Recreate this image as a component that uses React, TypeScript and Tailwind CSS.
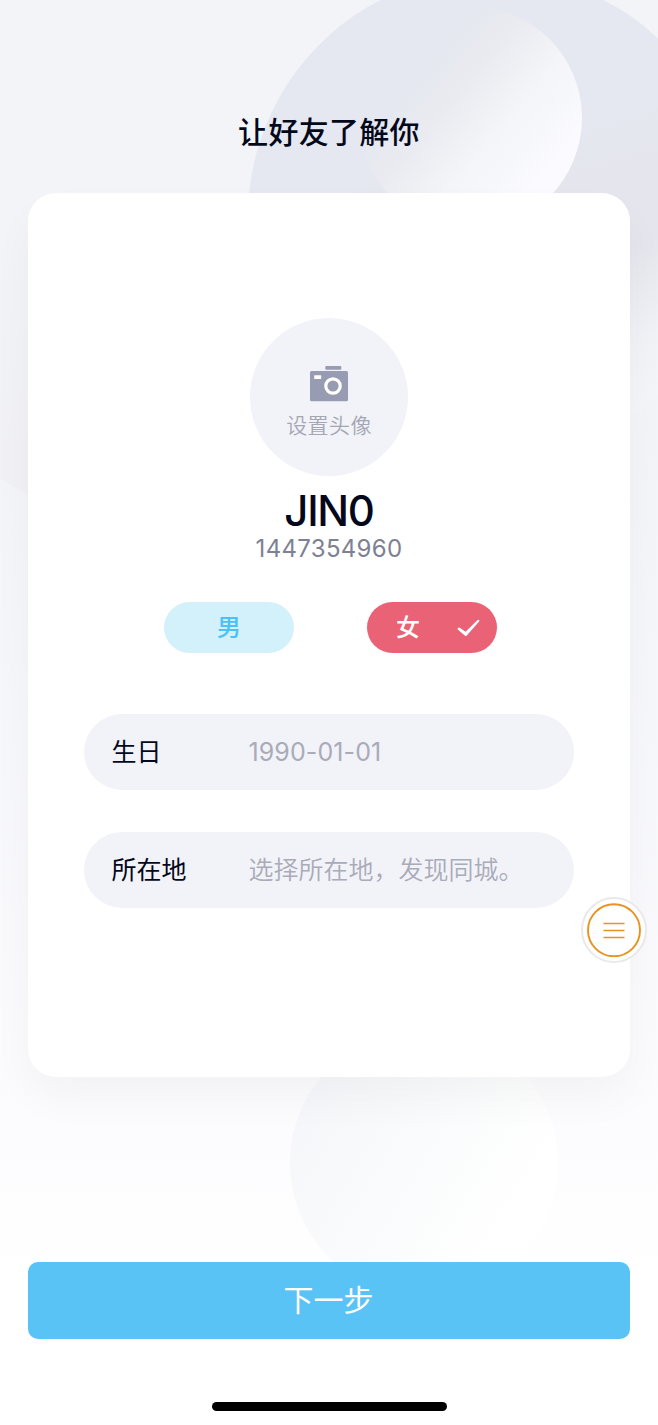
import { useState } from "react";

const fields = [
  { label: "生日", value: "1990-01-01", className: "tracking-[0.1px]" },
  { label: "所在地", value: "选择所在地，发现同城。", className: "font-[350]" },
];

function Backdrop() {
  return (
    <svg
      className="absolute inset-0 h-full w-full"
      viewBox="0 0 658 1425"
      fill="none"
      aria-hidden="true"
    >
      <defs>
        <linearGradient id="big" x1="500" y1="50" x2="600" y2="410" gradientUnits="userSpaceOnUse">
          <stop offset="0" stopColor="#e5e8f0" />
          <stop offset="0.25" stopColor="#e5e8f0" />
          <stop offset="0.4" stopColor="#e4e5ed" />
          <stop offset="0.6" stopColor="#e5e6ed" />
          <stop offset="0.85" stopColor="#f1f2f6" />
          <stop offset="1" stopColor="#f4f5f9" />
        </linearGradient>
        <linearGradient id="small" x1="418" y1="78" x2="540" y2="180" gradientUnits="userSpaceOnUse">
          <stop offset="0" stopColor="#e5e8f0" />
          <stop offset="0.25" stopColor="#eaebf0" />
          <stop offset="0.6" stopColor="#f4f5f8" />
          <stop offset="1" stopColor="#fafaff" />
        </linearGradient>
        <linearGradient id="side" x1="0" y1="230" x2="0" y2="495" gradientUnits="userSpaceOnUse">
          <stop offset="0" stopColor="#f0f0f5" stopOpacity="0" />
          <stop offset="1" stopColor="#f0f0f5" />
        </linearGradient>
        <linearGradient id="low" x1="310" y1="1100" x2="510" y2="1220" gradientUnits="userSpaceOnUse">
          <stop offset="0" stopColor="#f6f7fa" />
          <stop offset="0.5" stopColor="#fafbfc" />
          <stop offset="1" stopColor="#ffffff" />
        </linearGradient>
      </defs>
      <circle cx="135" cy="275" r="244" fill="url(#side)" />
      <circle cx="492" cy="217" r="244" fill="url(#big)" />
      <circle cx="470" cy="118" r="112" fill="url(#small)" />
      <circle cx="424" cy="1163" r="134" fill="url(#low)" />
    </svg>
  );
}

function CameraIcon() {
  return (
    <svg width="38" height="36" viewBox="0 0 38 36" fill="none" aria-hidden="true">
      <rect x="15.3" y="0" width="16" height="3.7" rx="1" fill="#989cb2" />
      <rect x="0" y="5" width="38" height="30.3" rx="1.5" fill="#989cb2" />
      <rect x="4.2" y="9.2" width="7" height="3.8" rx="0.5" fill="#fff" />
      <circle cx="23" cy="20" r="7.2" stroke="#fff" strokeWidth="3.2" />
    </svg>
  );
}

export default function App() {
  const [gender, setGender] = useState("female");

  return (
    <div className="relative flex h-[1425px] w-[658px] flex-col items-center overflow-hidden bg-linear-to-b from-[#f3f4f8] from-30% via-[#fbfbfe] via-75% to-white to-90% font-['Inter','Noto_Sans_CJK_SC',sans-serif] text-[#03081a]">
      <Backdrop />

      {/* Title */}
      <h1 className="relative mt-[110px] h-[83px] text-[30px] leading-[44px] font-medium tracking-[0.3px]">
        让好友了解你
      </h1>

      {/* Profile Card Start */}
      <main className="relative flex h-[884px] w-[602px] flex-col items-center rounded-[28px] bg-white pt-[125px] shadow-[0_22px_44px_rgba(0,0,0,0.035)]">
        <button
          type="button"
          className="flex size-[158px] shrink-0 flex-col items-center rounded-full bg-[#f2f3f8] pt-[48px]"
        >
          <CameraIcon />
          <span className="mt-[8px] text-[21px] leading-[32px] font-[350] tracking-[0.4px] text-[#a4a6b4]">
            设置头像
          </span>
        </button>
        <h2 className="mt-[10px] text-[42px] leading-[50px] font-medium tracking-[-1.3px]">JIN0</h2>
        <p className="text-[24px] leading-[26px] tracking-[0.3px] text-[#7d8193]">1447354960</p>

        {/* Gender Start */}
        <div className="mt-[40.4px] ml-[3px] flex gap-[73px]">
          <button
            type="button"
            onClick={() => setGender("male")}
            className="flex h-[51px] w-[130px] items-center justify-center rounded-full bg-[#d2f1fb] text-[24px] font-medium text-[#4bc1f5]"
          >
            男
          </button>
          <button
            type="button"
            onClick={() => setGender("female")}
            className="flex h-[51px] w-[130px] items-center justify-between rounded-full bg-[#ea6276] pr-[17px] pl-[29px] text-[24px] font-medium text-white"
          >
            女
            {gender === "female" && (
              <svg width="23" height="18" viewBox="0 0 23 18" fill="none" aria-hidden="true">
                <path
                  d="M0.8 9.2Q1.8 8.1 3 8.9L8.6 12.8L20.6 1Q21.6 0.4 22.3 1.2Q22.7 1.9 22.1 2.6L9.8 16.4Q8.8 17.4 7.8 16.4L1 10.8Q0.2 10 0.8 9.2Z"
                  fill="#fff"
                />
              </svg>
            )}
          </button>
        </div>
        {/* Gender End */}

        <div className="mt-[61px] flex flex-col gap-[42px]">
          {fields.map((field) => (
            <div
              key={field.label}
              className="flex h-[76px] w-[490px] items-center rounded-full bg-[#f2f3f8] pt-[1px] pl-[27.5px] text-[25px]"
            >
              <span className="w-[137px]">{field.label}</span>
              <span className={`text-[#a9abb9] ${field.className}`}>{field.value}</span>
            </div>
          ))}
        </div>
      </main>
      {/* Profile Card End */}

      <button
        type="button"
        className="relative mt-[185px] h-[77px] w-[602px] rounded-[10px] bg-[#5ac3f5] pr-[1px] text-[30px] text-white"
      >
        下一步
      </button>

      {/* Home indicator */}
      <div className="relative mt-[63px] h-[9px] w-[235px] rounded-full bg-black" />

      {/* Floating menu */}
      <button
        type="button"
        aria-label="菜单"
        className="absolute top-[897px] left-[581px] flex size-[66px] items-center justify-center rounded-full border-2 border-[#e9e9eb] bg-white"
      >
        <svg width="54" height="54" viewBox="0 0 54 54" fill="none" aria-hidden="true">
          <circle cx="27" cy="27.3" r="26" stroke="#e8931f" strokeWidth="1.9" />
          <path d="M16.5 20.5H37.5M16.5 27.5H37.5M16.5 34.5H37.5" stroke="#e8931f" strokeWidth="1.5" />
        </svg>
      </button>
    </div>
  );
}
